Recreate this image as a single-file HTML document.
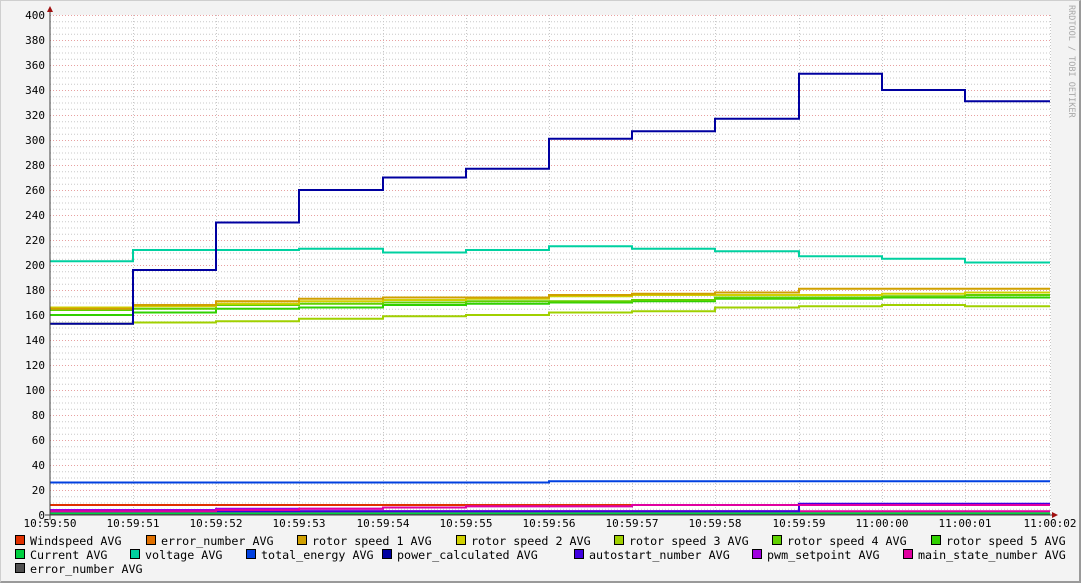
<!DOCTYPE html>
<html><head><meta charset="utf-8"><style>
html,body{margin:0;padding:0;}
body{width:1081px;height:583px;background:#f3f3f3;position:relative;overflow:hidden;font-family:"DejaVu Sans Mono","Liberation Mono",monospace;}
#frame{position:absolute;left:0;top:0;border-top:1px solid #cfcfcf;border-left:1px solid #cfcfcf;border-right:2px solid #9a9a9a;border-bottom:2px solid #9a9a9a;box-sizing:border-box;width:1081px;height:583px;}
svg{position:absolute;left:0;top:0;}
text{font-family:"DejaVu Sans Mono","Liberation Mono",monospace;font-size:11px;fill:#000;}
.lg text{font-size:11.7px;}
.wm{font-size:8.5px;fill:#a8a8a8;}
</style></head><body>
<div id="frame"></div>
<svg width="1081" height="583" id="g">
<rect x="50" y="15" width="1001" height="500" fill="#fff"/>
<g id="grid"></g>
<g id="series" fill="none" stroke-width="2"></g>
<g id="axes">
<line x1="50" y1="520" x2="50" y2="10" stroke="#404040"/>
<line x1="45" y1="515" x2="1055" y2="515" stroke="#404040"/>
<polygon points="47,12 53,12 50,6" fill="#a01010"/>
<polygon points="1052,512 1052,518 1058,515" fill="#a01010"/>
</g>
<g text-anchor="end">
<text x="45" y="19">400</text><text x="45" y="44">380</text><text x="45" y="69">360</text><text x="45" y="94">340</text><text x="45" y="119">320</text><text x="45" y="144">300</text><text x="45" y="169">280</text><text x="45" y="194">260</text><text x="45" y="219">240</text><text x="45" y="244">220</text><text x="45" y="269">200</text><text x="45" y="294">180</text><text x="45" y="319">160</text><text x="45" y="344">140</text><text x="45" y="369">120</text><text x="45" y="394">100</text><text x="45" y="419">80</text><text x="45" y="444">60</text><text x="45" y="469">40</text><text x="45" y="494">20</text><text x="45" y="519">0</text>
</g>
<g text-anchor="middle">
<text x="50" y="527">10:59:50</text><text x="133" y="527">10:59:51</text><text x="216" y="527">10:59:52</text><text x="299" y="527">10:59:53</text><text x="383" y="527">10:59:54</text><text x="466" y="527">10:59:55</text><text x="549" y="527">10:59:56</text><text x="632" y="527">10:59:57</text><text x="715" y="527">10:59:58</text><text x="799" y="527">10:59:59</text><text x="882" y="527">11:00:00</text><text x="965" y="527">11:00:01</text><text x="1050" y="527">11:00:02</text>
</g>
<text class="wm" transform="translate(1069,5) rotate(90)">RRDTOOL / TOBI OETIKER</text>
<g id="legend"></g>
<g class="lg">
<text x="30" y="545">Windspeed AVG</text><text x="161" y="545">error_number AVG</text><text x="312" y="545">rotor speed 1 AVG</text><text x="471" y="545">rotor speed 2 AVG</text><text x="629" y="545">rotor speed 3 AVG</text><text x="787" y="545">rotor speed 4 AVG</text><text x="946" y="545">rotor speed 5 AVG</text>
<text x="30" y="559">Current AVG</text><text x="145" y="559">voltage AVG</text><text x="261" y="559">total_energy AVG</text><text x="397" y="559">power_calculated AVG</text><text x="589" y="559">autostart_number AVG</text><text x="767" y="559">pwm_setpoint AVG</text><text x="918" y="559">main_state_number AVG</text>
<text x="30" y="573">error_number AVG</text>
</g>
</svg>
<script>
var NS="http://www.w3.org/2000/svg";
function el(p,t,a){var e=document.createElementNS(NS,t);for(var k in a)e.setAttribute(k,a[k]);p.appendChild(e);return e;}
var grid=document.getElementById('grid');
for(var v=0;v<=400;v+=5){var y=515-v*1.25+0.5;if(v==0)continue;
 el(grid,'line',{x1:50,x2:1051,y1:y,y2:y,stroke:(v%20==0)?'#e8a0a0':'#c8c8c8','stroke-dasharray':'1,2'});}
var xs=[50,133,216,299,383,466,549,632,715,799,882,965,1050];
for(var i=1;i<xs.length;i++){el(grid,'line',{x1:xs[i]+0.5,x2:xs[i]+0.5,y1:15,y2:515,stroke:'#c8c8c8','stroke-dasharray':'1,2'});}
var S=[
['#505050',[0.5,0.5,0.5,0.5,0.5,0.5,0.5,0.5,0.5,0.5,0.5,0.5]],
['#00d040',[1.5,1.5,1.5,1.5,1.5,1.5,1.5,1.5,1.5,1.5,1.5,1.5]],
['#e000a0',[3,3,3,3,3,3,3,3,3,3,3,3]],
['#a000e0',[4,4,5,5,6,7,7,8,8,8,8,8]],
['#4000e0',[3,3,3,3,3,3,3,3,3,9,9,9]],
['#e03000',[8,8,8,8,8,8,8,8,8,8,8,8]],
['#e000a0',[3,3,4,5,6,7,7,8,8,8,8,8]],
['#0040e0',[26,26,26,26,26,26,27,27,27,27,27,27]],
['#a0d000',[153,154,155,157,159,160,162,163,166,167,168,167]],
['#30d000',[160,162,165,166,168,169,170,171,173,173,174,174]],
['#60d000',[164,165,168,169,170,171,171,172,174,174,175,176]],
['#d0d000',[166,167,169,171,172,173,175,176,176,176,177,178]],
['#d0a000',[165,168,171,173,174,174,176,177,178,181,181,181]],
['#00d0a0',[203,212,212,213,210,212,215,213,211,207,205,202]],
['#0000a0',[153,196,234,260,270,277,301,307,317,353,340,331]]];
var sg=document.getElementById('series');
S.forEach(function(s){var d='';for(var i=0;i<12;i++){var y=515-s[1][i]*1.25;d+=(i==0?'M':'L')+xs[i]+','+y+'L'+xs[i+1]+','+y;}
el(sg,'path',{d:d,stroke:s[0]});});
var lg=document.getElementById('legend');
var L=[[15,541,'#e03000'],[146,541,'#e07000'],[297,541,'#d0a000'],[456,541,'#d0d000'],[614,541,'#a0d000'],[772,541,'#60d000'],[931,541,'#30d000'],
[15,555,'#00d040'],[130,555,'#00d0a0'],[246,555,'#0040e0'],[382,555,'#0000a0'],[574,555,'#4000e0'],[752,555,'#a000e0'],[903,555,'#e000a0'],[15,569,'#505050']];
L.forEach(function(l){el(lg,'rect',{x:l[0]+0.5,y:l[1]-5.5,width:9,height:9,fill:l[2],stroke:'#000'});});
</script>
</body></html>
